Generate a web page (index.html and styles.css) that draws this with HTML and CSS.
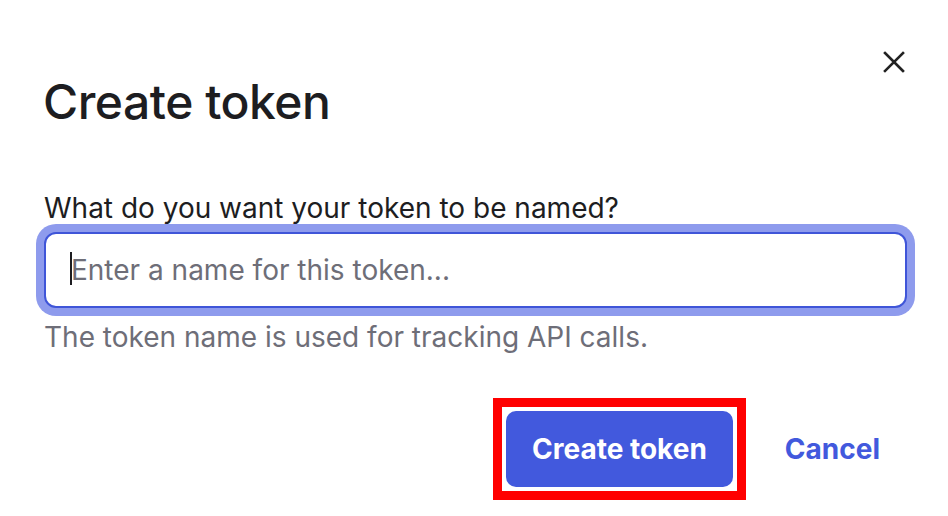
FILE: index.html
```html
<!DOCTYPE html>
<html lang="en">
<head>
    <meta charset="UTF-8">
    <meta name="viewport" content="width=device-width, initial-scale=1.0">
    <title>Create token</title>
    <link rel="stylesheet" href="styles.css">
</head>
<body>
<div class="modal">
    <button class="close" aria-label="Close">
        <svg width="22" height="22" viewBox="0 0 22 22"><path d="M2 2 L20 20 M20 2 L2 20" stroke="#222" stroke-width="2.6" stroke-linecap="square"/></svg>
    </button>
    <h1 class="title">Create token</h1>
    <form class="token-form" onsubmit="return false">
        <label class="field-label" for="tokenName">What do you want your token to be named?</label>
        <div class="field-wrap">
            <input class="field-input" type="text" id="tokenName" placeholder="Enter a name for this token...">
            <span class="caret"></span>
        </div>
        <p class="field-help">The token name is used for tracking API calls.</p>
        <div class="actions">
            <span class="highlight"><button type="submit" class="btn-primary">Create token</button></span>
            <button type="button" class="btn-link">Cancel</button>
        </div>
    </form>
</div>
</body>
</html>
```

FILE: styles.css
```css
body {
    margin: 0;
    background: #fff;
    font-family: Inter, "Noto Sans", sans-serif;
    color: #1d1d21;
}
.modal {
    position: relative;
    padding: 73px 41px 0 44px;
}
.close {
    position: absolute;
    top: 51px;
    right: 43px;
    width: 22px;
    height: 22px;
    padding: 0;
    border: none;
    background: none;
    cursor: pointer;
}
.close svg { display: block; }
.title {
    margin: 0 0 0 -1px;
    font-size: 48px;
    line-height: 58px;
    font-weight: 500;
    letter-spacing: -0.5px;
    color: #1d1d21;
}
.token-form {
    margin-top: 60px;
}
.field-label {
    display: block;
    font-size: 28px;
    line-height: 34px;
    margin-bottom: 7px;
}
.field-wrap {
    position: relative;
}
.field-input {
    display: block;
    width: 100%;
    height: 76px;
    box-sizing: border-box;
    padding: 0 24px 0 25px;
    border: 2px solid #3f55d8;
    border-radius: 12px;
    box-shadow: 0 0 0 8px #8e9bed;
    outline: none;
    font-family: inherit;
    font-size: 28px;
    color: #1d1d21;
}
.field-input::placeholder { color: #6e6e78; }
.caret {
    position: absolute;
    left: 26px;
    top: 20px;
    width: 2px;
    height: 33px;
    background: #1d1d21;
}
.field-help {
    margin: 12px 0 0;
    font-size: 28px;
    line-height: 34px;
    color: #6e6e78;
}
.actions {
    display: flex;
    justify-content: flex-end;
    align-items: center;
    gap: 12px;
    margin-top: 44px;
}
.highlight {
    display: block;
    padding: 4px;
    border: 9px solid #ff0000;
}
.btn-primary {
    display: block;
    height: 76px;
    padding: 0 26px;
    border: none;
    border-radius: 10px;
    background: #4259dd;
    color: #fff;
    font-family: inherit;
    font-size: 28px;
    font-weight: 700;
    cursor: pointer;
}
.btn-link {
    height: 76px;
    padding: 0 27px;
    border: none;
    background: none;
    color: #4259dd;
    font-family: inherit;
    font-size: 28px;
    font-weight: 700;
    cursor: pointer;
}
```
